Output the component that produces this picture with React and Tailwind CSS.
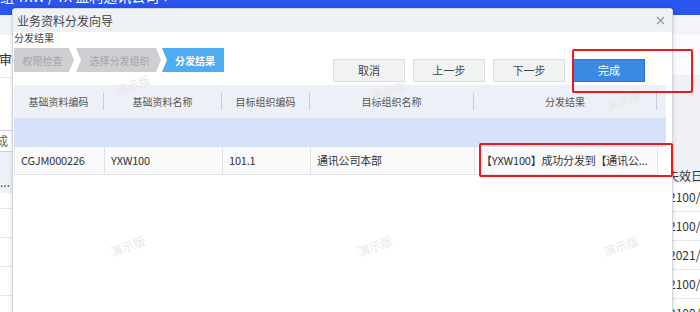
import React from "react";

const cols = [
  { label: "基础资料编码", w: "w-[90px]", value: "CGJM000226" },
  { label: "基础资料名称", w: "w-[118px]", value: "YXW100" },
  { label: "目标组织编码", w: "w-[88px]", value: "101.1" },
  { label: "目标组织名称", w: "w-[164px]", value: "通讯公司本部" },
  { label: "分发结果", w: "w-[183px]", value: "【YXW100】成功分发到【通讯公..." },
];

const rightDates = ["2100/", "2100/", "2021/", "2100/", "2100/"];

const Watermark = ({ className }) => (
  <span
    className={
      "absolute pointer-events-none text-[12px] leading-[14px] text-[#e8e8e8] -rotate-[20deg] " +
      className
    }
  >
    演示版
  </span>
);

const App = () => {
  return (
    <div className="relative w-[700px] h-[312px] overflow-hidden bg-white font-['Noto_Sans_CJK_SC','Noto_Sans',sans-serif] text-[#333]">
      {/* page behind the dialog */}
      <div className="flex flex-col h-full">
        <div className="h-[15px] bg-[#2a55ef] overflow-hidden shrink-0">
          <div className="-mt-[13px] text-[14px] leading-[18px] text-white whitespace-nowrap">
            组 YXW / YX 盈利通讯公司 ▾
          </div>
        </div>
        <div className="flex flex-1">
          {/* left strip */}
          <div className="w-[14px] overflow-hidden flex flex-col shrink-0">
            <div className="h-[20px] bg-[#f2f3f6]" />
            <div className="h-[42px] flex items-end pb-[10px] text-[13px] leading-[16px] -ml-[1px]">审</div>
            <div className="h-px bg-[#e6e8ec]" />
            <div className="h-[52px]" />
            <div className="h-[22px] border-y border-[#cfd2d8] flex items-center text-[12px] text-[#666] -ml-[4px] whitespace-nowrap">
              成
            </div>
            <div className="h-[41px] bg-[#edf1f8] flex items-end pb-[4px] text-[12px] leading-[14px] text-[#555]">...</div>
            <div className="h-[16px] border-b border-[#e6e6e6]" />
            <div className="h-[29px] border-b border-[#e6e6e6]" />
            <div className="h-[29px] border-b border-[#e6e6e6]" />
            <div className="h-[29px] border-b border-[#e6e6e6]" />
          </div>
          <div className="flex-1" />
          {/* right strip */}
          <div className="w-[28px] overflow-hidden flex flex-col shrink-0">
            <div className="h-[20px] bg-[#f3f4f7]" />
            <div className="h-[40px] bg-[#fafbfc]" />
            <div className="h-[88px] bg-[#eff1f5]" />
            <div className="h-[20px] bg-[#eef1f6] flex items-end text-[12px] leading-[14px] text-[#333] -ml-[5px] whitespace-nowrap">
              失效日期
            </div>
            {rightDates.map((d, i) => (
              <div
                key={i}
                className="h-[29px] shrink-0 border-b border-[#e8e8e8] flex items-center text-[12px] text-[#333] -ml-[3px] whitespace-nowrap"
              >
                {d}
              </div>
            ))}
          </div>
        </div>
      </div>

      {/* dialog */}
      <div className="absolute left-[12px] top-[8px] w-[661px] h-[320px] bg-white border border-[#d3d6dc] rounded-t-[3px] shadow-[0_0_4px_rgba(0,0,0,0.15)] flex flex-col">
        <div className="h-[23px] bg-[#eef1f6] flex items-center justify-between pl-[4px] pr-[7px] shrink-0">
          <span className="text-[12px] text-[#444] leading-[16px]">业务资料分发向导</span>
          <svg width="9" height="9" viewBox="0 0 9 9" className="mb-[1px]">
            <path d="M1 1L8 8M8 1L1 8" stroke="#9a9a9a" strokeWidth="1.2" />
          </svg>
        </div>

        <div className="relative flex-1 pl-[1px] pr-[6px]">
          <div className="text-[10px] leading-[12px] text-[#444]">分发结果</div>

          <div className="flex items-start justify-between mt-[4px] pr-[21px]">
            <div className="flex h-[24px] text-[10px]">
              <div className="w-[60px] bg-[#cfcfd3] text-[#a4a4aa] flex items-center justify-center pr-[3px] [clip-path:polygon(0_0,calc(100%-5px)_0,100%_50%,calc(100%-5px)_100%,0_100%)]">
                权限检查
              </div>
              <div className="ml-[2px] w-[85px] bg-[#cfcfd3] text-[#a4a4aa] flex items-center justify-center pl-[2px] [clip-path:polygon(0_0,calc(100%-5px)_0,100%_50%,calc(100%-5px)_100%,0_100%,5px_50%)]">
                选择分发组织
              </div>
              <div className="ml-[1px] w-[62px] bg-[#4eacf2] text-white font-bold flex items-center justify-center pl-[4px] [clip-path:polygon(0_0,100%_0,100%_100%,0_100%,5px_50%)]">
                分发结果
              </div>
            </div>
            <div className="flex gap-[8px] mt-[11px]">
              {["取消", "上一步", "下一步"].map((b) => (
                <button
                  key={b}
                  className="w-[72px] h-[23px] bg-[#f1f2f4] border border-[#dcdde0] text-[11px] text-[#444] flex items-center justify-center"
                >
                  {b}
                </button>
              ))}
              <button className="w-[72px] h-[23px] bg-[#3a89e2] border border-[#2c72c9] text-[11px] text-white flex items-center justify-center">
                完成
              </button>
            </div>
          </div>

          {/* table */}
          <div className="mt-[3px] w-[652px]">
            <div className="flex h-[33px] bg-[#edf0f6] text-[#555] text-[10px]">
              {cols.map((c) => (
                <div key={c.label} className={"flex items-center " + c.w}>
                  <span className="flex-1 text-center">{c.label}</span>
                  <span className="w-px h-[17px] bg-[#c9ccd2]" />
                </div>
              ))}
              <div className="flex-1" />
            </div>
            <div className="h-[29px] bg-[#d6e1fa]" />
            <div className="flex h-[28px] text-[11px]">
              <div className="flex bg-[#fafafa] border-l border-b border-[#e2e3e6]">
                {cols.map((c) => (
                  <div
                    key={c.label}
                    className={"flex items-center pl-[6px] border-r border-[#e2e3e6] overflow-hidden whitespace-nowrap " + c.w}
                  >
                    <span className="tracking-[-0.2px]">{c.value}</span>
                  </div>
                ))}
              </div>
            </div>
          </div>

          <Watermark className="left-[102px] top-[46px]" />
          <Watermark className="left-[357px] top-[52px]" />
          <Watermark className="left-[592px] top-[62px]" />
          <Watermark className="left-[97px] top-[207px]" />
          <Watermark className="left-[344px] top-[207px]" />
          <Watermark className="left-[590px] top-[207px]" />
        </div>
      </div>

      {/* red highlight boxes */}
      <div className="absolute left-[572px] top-[49px] w-[121px] h-[44px] border-2 border-[#f01818] rounded-[2px]" />
      <div className="absolute left-[479px] top-[143px] w-[194px] h-[34px] border-2 border-[#f01818] rounded-[2px]" />
    </div>
  );
};

export default App;
